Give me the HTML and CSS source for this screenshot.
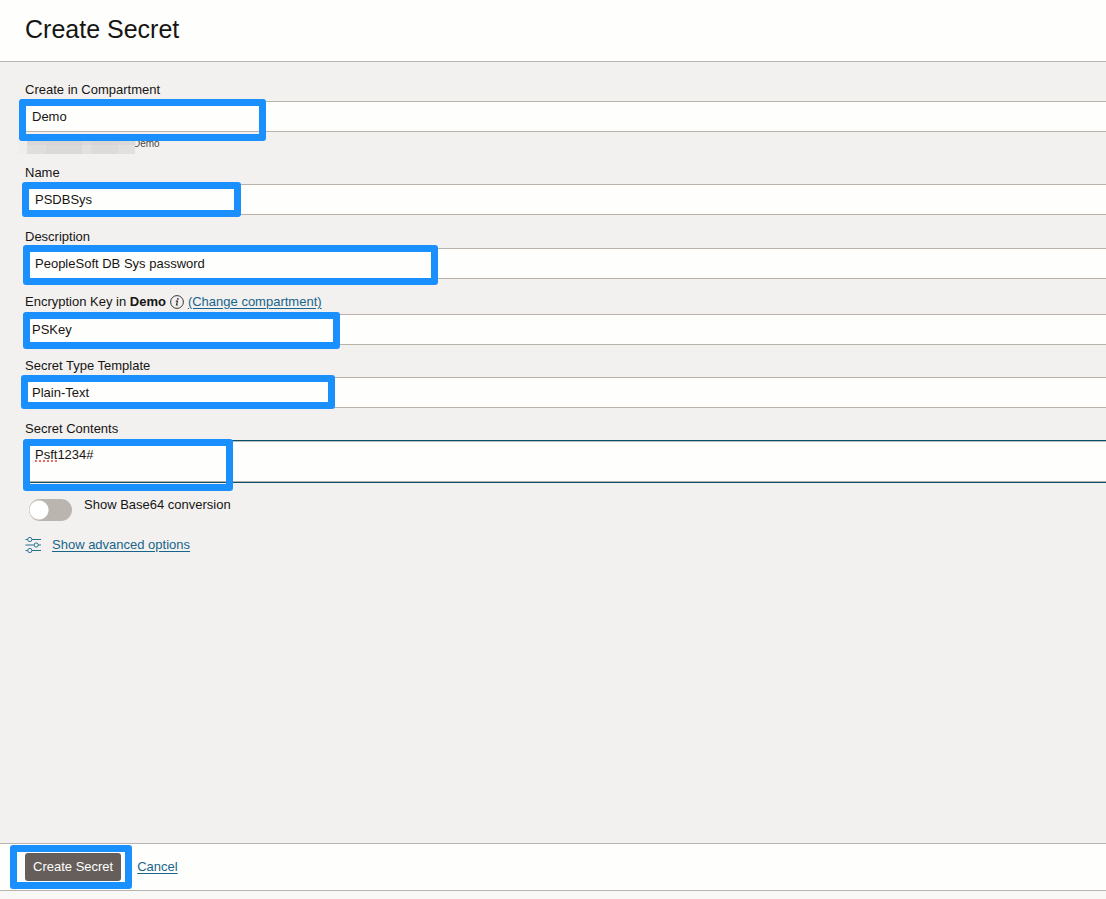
FILE: index.html
```html
<!DOCTYPE html>
<html lang="en">
<head>
<meta charset="utf-8">
<meta name="viewport" content="width=device-width, initial-scale=1">
<title>Create Secret</title>
<link rel="stylesheet" href="styles.css">
</head>
<body>
<header class="header"><h1 class="title">Create Secret</h1></header>
<form class="form" id="secret-form">
  <div class="field">
    <label class="label" for="compartment">Create in Compartment</label>
    <div class="control">
      <select class="input input-select" id="compartment"><option>Demo</option></select>
      <span class="mark mark-compartment"></span>
    </div>
    <div class="hint"><span class="redacted"></span><span class="hint-text">Demo</span></div>
  </div>
  <div class="field">
    <label class="label" for="name">Name</label>
    <div class="control">
      <input class="input" id="name" type="text" value="PSDBSys">
      <span class="mark mark-name"></span>
    </div>
  </div>
  <div class="field">
    <label class="label" for="description">Description</label>
    <div class="control">
      <input class="input" id="description" type="text" value="PeopleSoft DB Sys password">
      <span class="mark mark-description"></span>
    </div>
  </div>
  <div class="field">
    <div class="label-row">
      <label for="key">Encryption Key in <b>Demo</b></label>
      <svg class="info" viewBox="0 0 14 14" aria-hidden="true">
        <circle cx="7" cy="7" r="6.4" fill="none" stroke="#3a3632"/>
        <circle cx="7.8" cy="3.9" r=".9" fill="#3a3632"/>
        <path d="M5.8 6.1h1.7l-1 3.9h1.4" fill="none" stroke="#3a3632" stroke-width="1.2"/>
      </svg>
      <a class="link" href="#change">(Change compartment)</a>
    </div>
    <div class="control">
      <select class="input input-select" id="key"><option>PSKey</option></select>
      <span class="mark mark-key"></span>
    </div>
  </div>
  <div class="field">
    <label class="label label-compact" for="template">Secret Type Template</label>
    <div class="control">
      <select class="input input-select" id="template"><option>Plain-Text</option></select>
      <span class="mark mark-template"></span>
    </div>
  </div>
  <div class="field">
    <label class="label label-compact" for="contents">Secret Contents</label>
    <div class="control">
      <textarea class="input input-area" id="contents" spellcheck="false">Psft1234#</textarea>
      <span class="misspelling"></span>
      <span class="mark mark-contents"></span>
    </div>
  </div>
  <div class="toggle-row">
    <input class="toggle" id="base64" type="checkbox" role="switch">
    <label class="toggle-label" for="base64">Show Base64 conversion</label>
  </div>
  <div class="advanced">
    <svg class="sliders" viewBox="0 0 16 16" fill="none" stroke="#23708f" aria-hidden="true">
      <path d="M.5 2.5h2M7 2.5h9M.5 8h8.3M13.4 8H16M.5 13.5h2M7 13.5h9"/>
      <circle cx="4.8" cy="2.5" r="2.1"/><circle cx="11.2" cy="8" r="2.1"/><circle cx="4.8" cy="13.5" r="2.1"/>
    </svg>
    <a class="link" href="#advanced">Show advanced options</a>
  </div>
</form>
<footer class="footer">
  <div class="submit">
    <button class="button" type="submit" form="secret-form">Create Secret</button>
    <span class="mark mark-submit"></span>
  </div>
  <a class="link" href="#cancel">Cancel</a>
</footer>
</body>
</html>
```
FILE: styles.css
```css
* { box-sizing: border-box; }

body {
  margin: 0;
  min-height: 100vh;
  display: flex;
  flex-direction: column;
  background: #f9f8f7;
  color: #161513;
  font: 13px/16px "Liberation Sans", Arial, sans-serif;
}

.header {
  padding: 13px 25px 16px;
  background: #fefefc;
  border-bottom: 1px solid #b8b4af;
}

.title {
  margin: 0;
  font-size: 25px;
  line-height: 32px;
  font-weight: 400;
}

.form {
  flex: 1;
  display: flex;
  flex-direction: column;
  gap: 10px;
  padding: 16px 0 16px 25px;
  background: #f3f1f0;
}

.label { display: block; line-height: 23px; }
.label-compact { line-height: 22px; }

.label-row {
  display: flex;
  align-items: center;
  height: 25px;
}

.info { width: 14px; height: 14px; margin: 0 4px; }

.control { position: relative; display: flex; }

.input {
  width: 100%;
  height: 31px;
  margin: 0;
  padding: 0 9px;
  border: 1px solid #b8b2aa;
  border-right: 0;
  border-radius: 2px 0 0 2px;
  background: #fefefc;
  color: inherit;
  font: inherit;
  outline: 0;
}

.input-select { appearance: none; padding: 0 6px; }

.input-area {
  height: 43px;
  padding: 6px 9px;
  border-color: #0b4f6a;
  box-shadow: inset 0 1px #b5bbb9, inset 0 -1px #b5b1a8;
  resize: none;
  overflow: hidden;
}

.misspelling {
  position: absolute;
  left: 10px;
  top: 20px;
  width: 22px;
  border-bottom: 2px dotted #f26a66;
}

.hint {
  display: flex;
  height: 19px;
  padding-top: 4px;
  font-size: 10px;
  line-height: 15px;
  color: #4b4744;
}

.redacted {
  position: relative;
  height: 18px;
  width: 117px;
  margin: 0 -2px 0 -7px;
  background:
    linear-gradient(90deg, #efeeed 9px, transparent 9px),
    linear-gradient(#d3d2d180 9px, transparent 9px),
    linear-gradient(90deg, #dfdedd 28px, #dad9d8 28px, #dad9d8 64px, #e2e1e0 64px, #e2e1e0 73px, #dcdbda 73px, #dcdbda 100px, #e1e0df 100px);
}

.mark {
  position: absolute;
  border: 7px solid #1a90ff;
  border-radius: 3px;
  pointer-events: none;
  z-index: 1;
}

.mark-compartment { left: -6px; top: -2px; width: 247px; height: 42px; }
.mark-name { left: -3px; top: -2px; width: 219px; height: 35px; }
.mark-description { left: -2px; top: -3px; width: 415px; height: 40px; }
.mark-key { left: -2px; top: -2px; width: 317px; height: 37px; }
.mark-template { left: -4px; top: -2px; width: 314px; height: 34px; }
.mark-contents { left: -2px; top: -1px; width: 210px; height: 52px; }
.mark-submit { left: -15px; top: -8px; width: 122px; height: 44px; }

.toggle-row {
  display: flex;
  align-items: flex-start;
  gap: 12px;
  padding: 6px 0 0 4px;
}

.toggle {
  appearance: none;
  width: 43px;
  height: 22px;
  margin: 0;
  border-radius: 11px;
  background: radial-gradient(circle at 10px 11px, #ffffff 9px, #bab5af 10px);
}

.toggle-label { line-height: 12px; }

.advanced { display: flex; align-items: center; gap: 11px; padding-top: 6px; }
.sliders { width: 16px; height: 16px; }

.link {
  color: #17658a;
  text-decoration: underline;
  text-underline-offset: 2px;
}

.footer {
  display: flex;
  align-items: center;
  gap: 16px;
  margin-bottom: 8px;
  padding: 9px 25px;
  border-top: 1px solid #b8b4af;
  border-bottom: 1px solid #b8b4af;
  background: #fefefc;
}

.submit { position: relative; display: flex; }

.button {
  height: 28px;
  padding: 0 8px;
  border: 0;
  border-radius: 3px;
  background: #665e5a;
  color: #ffffff;
  font: inherit;
}
```
